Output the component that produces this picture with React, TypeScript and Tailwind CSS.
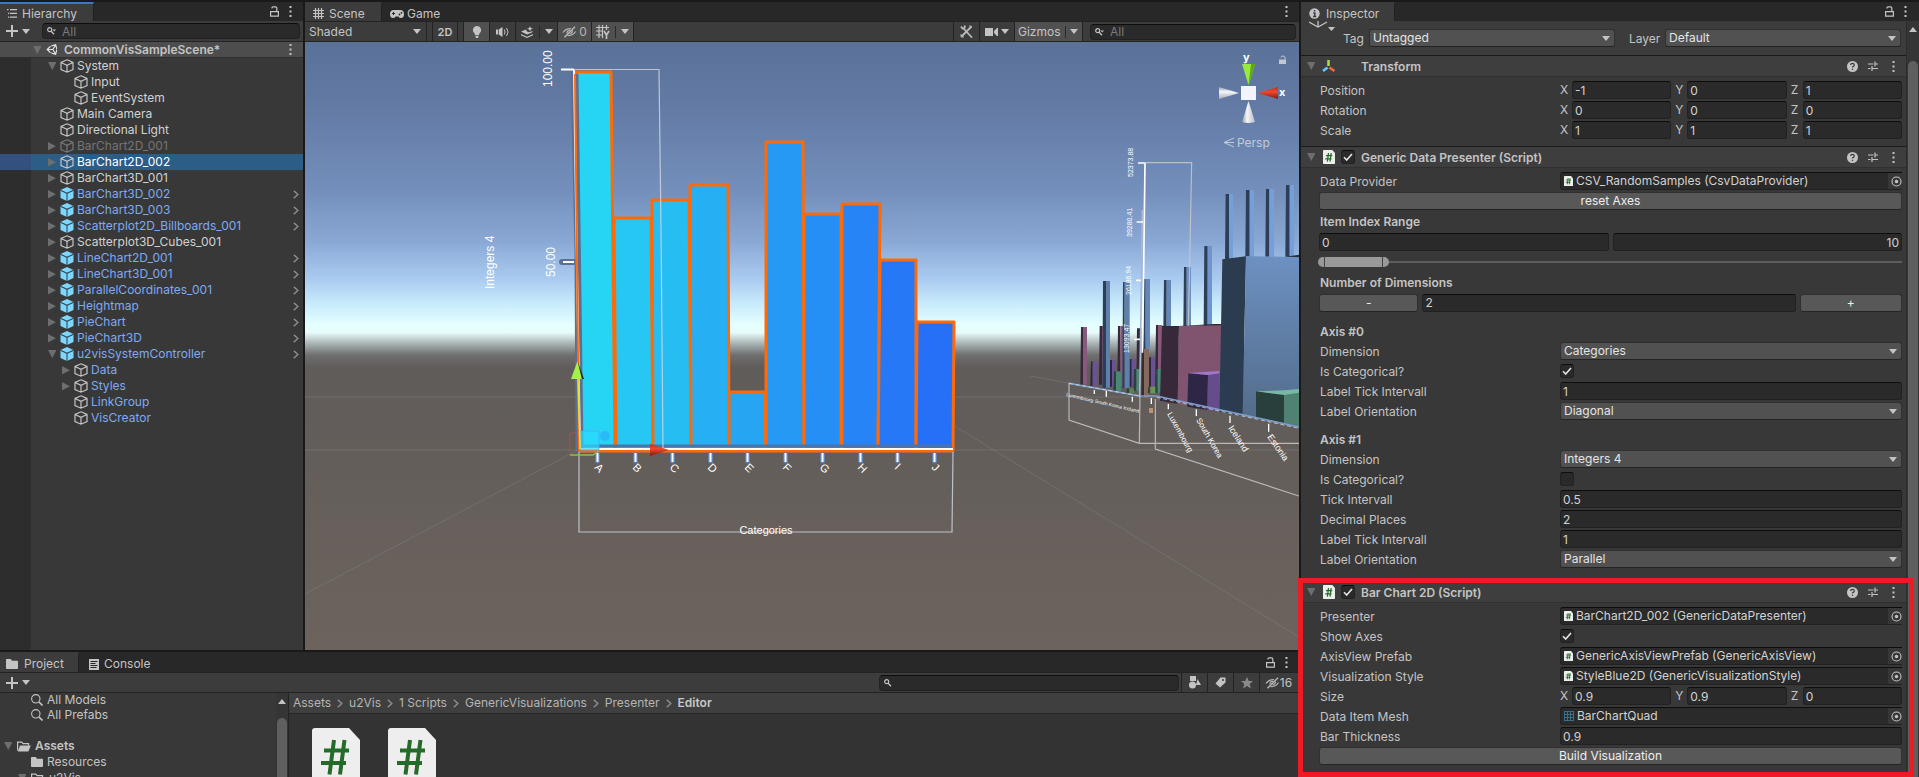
import { useId } from "react";
import type { ReactNode } from "react";
import { FaUnity } from "react-icons/fa";

/* ---------- icons ---------- */

function Caret({ className = "" }: { className?: string }) {
  return (
    <svg width="8" height="5" viewBox="0 0 8 5" className={`shrink-0 fill-[#c4c4c4] ${className}`} aria-hidden="true">
      <path d="M0 0h8L4 5z" />
    </svg>
  );
}

function Foldout({ open, className = "" }: { open: boolean; className?: string }) {
  return (
    <svg width="8" height="8" viewBox="0 0 8 8" className={`shrink-0 fill-[#6e6e6e] ${className}`} aria-hidden="true">
      {open ? <path d="M0 0h8.500L4.250 8z" /> : <path d="M0 0l8 4.250-8 4.250z" />}
    </svg>
  );
}

function Cube({ kind }: { kind: "line" | "dim" | "prefab" }) {
  if (kind === "prefab") {
    return (
      <svg width="14" height="14" viewBox="0 0 14 14" className="shrink-0" aria-hidden="true">
        <path d="M7 0l6.500 3v8L7 14 .5 11V3z" fill="#7fd6fd" />
        <path d="M.5 3.300L7 6.300l6.500-3M7 6.300V14" stroke="#2c4a5c" strokeWidth="1.100" fill="none" />
      </svg>
    );
  }
  return (
    <svg width="14" height="14" viewBox="0 0 14 14" className="shrink-0" fill="none" strokeWidth="1.200" stroke={kind === "dim" ? "#777" : "#c4c4c4"} aria-hidden="true">
      <path d="M7 .8l6 2.700v7L7 13.200l-6-2.700v-7zM1 3.500l6 2.900 6-2.900M7 6.400v6.800" />
    </svg>
  );
}

function Lock() {
  return (
    <svg width="9" height="11" viewBox="0 0 9 11" fill="none" stroke="#c4c4c4" strokeWidth="1.200" aria-hidden="true">
      <path d="M.6 5.600h7.800v4.600H.6zM2 2.600V1.800Q2 .8 3 .8h2.600q1.200 0 1.200 1.200v3.600" />
    </svg>
  );
}

function Kebab() {
  return (
    <svg width="3" height="11" viewBox="0 0 3 11" className="fill-[#c4c4c4]" aria-hidden="true">
      <path d="M.5 0h2v2h-2zM.5 4.500h2v2h-2zM.5 9h2v2h-2z" />
    </svg>
  );
}

function Plus() {
  return (
    <svg width="12" height="12" viewBox="0 0 12 12" className="fill-[#c4c4c4]" aria-hidden="true">
      <path d="M5 0h2v5h5v2H7v5H5V7H0V5h5z" />
    </svg>
  );
}

function SearchSmall({ arrow = false }: { arrow?: boolean }) {
  return (
    <svg width="9" height="8" viewBox="0 0 9 8" className="shrink-0" aria-hidden="true">
      <circle cx="2.700" cy="2.700" r="2" fill="none" stroke="#c4c4c4" strokeWidth="1.200" />
      <path d="M4.200 4.200L7 7.200" stroke="#c4c4c4" strokeWidth="1.300" />
      {arrow && <path d="M5.500 2.500H9L7.250 4.500z" fill="#c4c4c4" />}
    </svg>
  );
}

function SearchLarge() {
  return (
    <svg width="12" height="12" viewBox="0 0 12 12" className="shrink-0" fill="none" stroke="#c4c4c4" aria-hidden="true">
      <circle cx="4.800" cy="4.800" r="4.200" strokeWidth="1.100" />
      <path d="M8 8l3.500 3.500" strokeWidth="1.600" />
    </svg>
  );
}

function EyeOff() {
  return (
    <svg width="15" height="12" viewBox="0 0 15 12" fill="none" stroke="#b4b4b4" strokeWidth="1.200" aria-hidden="true">
      <path d="M1 6.500Q4 2.200 9 2.600M13.500 5.500Q10.500 10.200 5.500 9.500" />
      <path d="M5 7.500Q4.800 4.500 8 4.300M10.500 4.500Q10.500 7.500 7.500 8" />
      <path d="M2.500 11.300L13 .7" strokeWidth="1.500" />
    </svg>
  );
}

function CsIcon({ size }: { size: "sm" | "md" | "lg" }) {
  const box = { sm: "h-[10px] w-[9px]", md: "h-[14px] w-3", lg: "h-14 w-12" }[size];
  return (
    <svg viewBox="0 0 48 56" className={`shrink-0 ${box}`} preserveAspectRatio="none" aria-hidden="true">
      <path d="M3 0h34l11 12v41a3 3 0 0 1-3 3H3a3 3 0 0 1-3-3V3a3 3 0 0 1 3-3z" fill="#eee" />
      <path d="M17.500 46.500L22 12M28 46.500L32.500 12M12 22.500h25M9 35h25" stroke="#246b2a" strokeWidth={size === "lg" ? 4 : 5} fill="none" />
    </svg>
  );
}

function Folder({ open = false }: { open?: boolean }) {
  return open ? (
    <svg width="14" height="11" viewBox="0 0 14 11" className="shrink-0" aria-hidden="true">
      <path d="M.6 9.500V1.100h4.200L6 2.600h5.500v1.800" fill="none" stroke="#c4c4c4" strokeWidth="1.200" />
      <path d="M3 4.600h10.800L11.400 10.500H.8z" fill="#c4c4c4" />
    </svg>
  ) : (
    <svg width="12" height="10" viewBox="0 0 12 10" className="shrink-0 fill-[#c4c4c4]" aria-hidden="true">
      <path d="M.8 0h4L6 1.700h5.200q.8 0 .8.800V9q0 1-.8 1H.8Q0 10 0 9V.8Q0 0 .8 0z" />
    </svg>
  );
}

function Chevron({ className = "" }: { className?: string }) {
  return (
    <svg width="6" height="9" viewBox="0 0 6 9" fill="none" stroke="#8f8f8f" strokeWidth="1.400" className={`shrink-0 ${className}`} aria-hidden="true">
      <path d="M.8.700l4 3.800-4 3.800" />
    </svg>
  );
}

/* ---------- shared controls ---------- */

function IconButton({ label, children, className = "" }: { label: string; children: ReactNode; className?: string }) {
  return (
    <button type="button" aria-label={label} className={`flex h-full shrink-0 items-center justify-center ${className}`}>
      {children}
    </button>
  );
}

function Tab({ active = false, focused = false, icon, label, className = "" }: { active?: boolean; focused?: boolean; icon: ReactNode; label: string; className?: string }) {
  return (
    <button
      type="button"
      className={`flex h-full items-center gap-[6px] border-t-2 pt-[2px] ${focused ? "border-t-[#3a79bb]" : active ? "border-t-[#3c3c3c]" : "border-t-transparent"} ${
        active ? "border-r border-r-[#202020] bg-[#3c3c3c]" : ""
      } ${className}`}
    >
      {icon}
      <span>{label}</span>
    </button>
  );
}

function SearchBox({ label, placeholder, arrow, className }: { label: string; placeholder?: string; arrow?: boolean; className: string }) {
  return (
    <label className={`flex h-4 items-center gap-[6px] rounded border border-[#212121] border-t-[#0d0d0d] bg-[#2a2a2a] px-1 ${className}`}>
      <SearchSmall arrow={arrow} />
      <input type="search" aria-label={label} placeholder={placeholder} className="min-w-0 flex-1 bg-transparent leading-3 outline-none placeholder:text-[#7a7a7a]" />
    </label>
  );
}

function TextBox({ value, label, id, className = "" }: { value: string; label?: string; id?: string; className?: string }) {
  return (
    <input
      id={id}
      aria-label={label}
      defaultValue={value}
      className={`h-[18px] w-full min-w-0 rounded-[3px] border border-[#212121] border-t-[#0d0d0d] bg-[#2a2a2a] px-[2px] text-[#d2d2d2] outline-none ${className}`}
    />
  );
}

function Popup({ value, id, className = "" }: { value: string; id?: string; className?: string }) {
  return (
    <div className={`grid min-w-0 items-center ${className}`}>
      <select id={id} defaultValue={value} className="col-start-1 row-start-1 h-[18px] w-full appearance-none rounded-[3px] border border-[#303030] border-b-[#242424] bg-[#515151] px-[3px] leading-4 text-[#e4e4e4]">
        <option>{value}</option>
      </select>
      <Caret className="pointer-events-none col-start-1 row-start-1 mr-[5px] justify-self-end" />
    </div>
  );
}

function CheckBox({ checked, id, label }: { checked: boolean; id?: string; label?: string }) {
  return (
    <span className="grid size-[14px] shrink-0 place-items-center">
      <input
        id={id}
        aria-label={label}
        type="checkbox"
        defaultChecked={checked}
        className="peer col-start-1 row-start-1 size-[14px] appearance-none rounded-[3px] border border-[#212121] border-t-[#0d0d0d] bg-[#2a2a2a]"
      />
      <svg width="10" height="8" viewBox="0 0 10 8" className="pointer-events-none col-start-1 row-start-1 hidden peer-checked:block" aria-hidden="true">
        <path d="M1 4.300L3.700 7 9 1" fill="none" stroke="#e6e6e6" strokeWidth="1.600" />
      </svg>
    </span>
  );
}

function PushButton({ children, className = "w-full" }: { children: ReactNode; className?: string }) {
  return (
    <button type="button" className={`h-[18px] rounded-[3px] border border-[#303030] border-b-[#242424] bg-[#585858] leading-4 text-[#eee] ${className}`}>
      {children}
    </button>
  );
}

function ObjectRef({ value, id, mesh = false }: { value: string; id?: string; mesh?: boolean }) {
  return (
    <div className="flex h-[18px] w-full items-center rounded-l-[3px] border border-r-0 border-[#212121] border-t-[#0d0d0d] bg-[#2a2a2a] pl-[3px]">
      {mesh ? (
        <svg width="10" height="10" viewBox="0 0 10 10" className="shrink-0" aria-hidden="true">
          <path d="M0 .5h10M0 3.500h10M0 6.500h10M0 9.500h10M.5 0v10M3.500 0v10M6.500 0v10M9.500 0v10" stroke="#3a7f9c" strokeWidth=".8" />
        </svg>
      ) : (
        <CsIcon size="sm" />
      )}
      <input id={id} readOnly defaultValue={value} className="min-w-0 flex-1 bg-transparent pl-[3px] text-[#d2d2d2] outline-none" />
      <button type="button" aria-label={`Select ${value}`} className="flex h-4 w-[14px] items-center justify-end bg-[#373737]">
        <svg width="11" height="11" viewBox="0 0 11 11" className="shrink-0" aria-hidden="true">
          <circle cx="5.500" cy="5.500" r="4.500" fill="none" stroke="#c4c4c4" strokeWidth="1.100" />
          <circle cx="5.500" cy="5.500" r="1.700" fill="#c4c4c4" />
        </svg>
      </button>
    </div>
  );
}

/* ---------- hierarchy ---------- */

type Node = { name: string; depth: number; fold?: "open" | "closed"; kind?: "prefab" | "dim" | "child"; selected?: boolean };

const nodes: Node[] = [
  { name: "System", depth: 1, fold: "open" },
  { name: "Input", depth: 2 },
  { name: "EventSystem", depth: 2 },
  { name: "Main Camera", depth: 1 },
  { name: "Directional Light", depth: 1 },
  { name: "BarChart2D_001", depth: 1, fold: "closed", kind: "dim" },
  { name: "BarChart2D_002", depth: 1, fold: "closed", selected: true },
  { name: "BarChart3D_001", depth: 1, fold: "closed" },
  { name: "BarChart3D_002", depth: 1, fold: "closed", kind: "prefab" },
  { name: "BarChart3D_003", depth: 1, fold: "closed", kind: "prefab" },
  { name: "Scatterplot2D_Billboards_001", depth: 1, fold: "closed", kind: "prefab" },
  { name: "Scatterplot3D_Cubes_001", depth: 1, fold: "closed" },
  { name: "LineChart2D_001", depth: 1, fold: "closed", kind: "prefab" },
  { name: "LineChart3D_001", depth: 1, fold: "closed", kind: "prefab" },
  { name: "ParallelCoordinates_001", depth: 1, fold: "closed", kind: "prefab" },
  { name: "Heightmap", depth: 1, fold: "closed", kind: "prefab" },
  { name: "PieChart", depth: 1, fold: "closed", kind: "prefab" },
  { name: "PieChart3D", depth: 1, fold: "closed", kind: "prefab" },
  { name: "u2visSystemController", depth: 1, fold: "open", kind: "prefab" },
  { name: "Data", depth: 2, fold: "closed", kind: "child" },
  { name: "Styles", depth: 2, fold: "closed", kind: "child" },
  { name: "LinkGroup", depth: 2, kind: "child" },
  { name: "VisCreator", depth: 2, kind: "child" },
];

function HierarchyRow({ node }: { node: Node }) {
  const color = node.selected ? "text-white" : node.kind === "dim" ? "text-[#747474]" : node.kind ? "text-[#7faaf0]" : "text-[#d2d2d2]";
  return (
    <li className={`flex h-4 ${node.selected ? "bg-[#2c5d87]" : ""}`}>
      <span className={`w-[31px] shrink-0 ${node.selected ? "bg-[#33507f]" : ""}`} />
      <div className={`flex flex-1 items-center ${node.depth === 2 ? "pl-[31px]" : "pl-[17px]"} ${color}`}>
        <span className="w-3">{node.fold && <Foldout open={node.fold === "open"} />}</span>
        <Cube kind={node.kind === "prefab" ? "prefab" : node.kind === "dim" ? "dim" : "line"} />
        <span className="ml-[3px] flex-1 whitespace-nowrap">{node.name}</span>
        {node.kind === "prefab" && <Chevron className="mr-1" />}
      </div>
    </li>
  );
}

function Hierarchy() {
  return (
    <section aria-label="Hierarchy" className="flex min-w-0 flex-col overflow-hidden bg-[#383838]">
      <header className="flex h-[19px] shrink-0 items-center justify-between bg-[#282828]">
        <Tab
          active
          focused
          className="w-[94px] pl-[7px]"
          label="Hierarchy"
          icon={
            <svg width="10" height="9" viewBox="0 0 10 9" className="-mr-px fill-[#c4c4c4]" aria-hidden="true">
              <path d="M3 0h7v1.300H3zM3 3.800h7v1.300H3zM3 7.500h7v1.300H3zM0 0h1.500v1.300H0zM1 3.800h1.300v1.300H1zM1 7.500h1.300v1.300H1z" />
            </svg>
          }
        />
        <div className="flex items-center gap-[10px] pr-[11px]">
          <IconButton label="Lock hierarchy"><Lock /></IconButton>
          <IconButton label="Hierarchy menu"><Kebab /></IconButton>
        </div>
      </header>
      <div className="flex h-[21px] shrink-0 items-center border-b border-[#232323] bg-[#3c3c3c] pr-[3px] pl-[6px]">
        <IconButton label="Create" className="gap-1"><Plus /><Caret /></IconButton>
        <SearchBox label="Search hierarchy" placeholder="All" arrow className="ml-3 flex-1" />
      </div>
      <div className="flex h-4 shrink-0 items-center border-b border-[#303030] bg-[#4d4d4d] pr-[11px] pl-[33px] font-semibold">
        <Foldout open className="mr-[5px]" />
        <FaUnity className="size-[13px] text-[#e4e4e4]" />
        <span className="ml-[5px] flex-1">CommonVisSampleScene*</span>
        <IconButton label="Scene menu"><Kebab /></IconButton>
      </div>
      <ul className="flex-1 bg-linear-to-r from-[#2d2d2d] from-[31px] to-[#383838] to-[31px]">
        {nodes.map((n) => <HierarchyRow key={n.name} node={n} />)}
      </ul>
    </section>
  );
}

/* ---------- scene view ---------- */

const bars = [
  { l: "A", c: "#26d4f3", p: "576,72 611,72 615,451 580,451", x: 597 },
  { l: "B", c: "#26c8f3", p: "614,218 651,218 653,451 616,451", x: 635 },
  { l: "C", c: "#26bdf3", p: "652,200 689,200 691,451 653,451", x: 672 },
  { l: "D", c: "#26b0f3", p: "690,185 728,185 729,451 691,451", x: 710 },
  { l: "E", c: "#26a5f3", p: "729,392 765,392 766,451 729,451", x: 747 },
  { l: "F", c: "#2699f5", p: "766,142 803,142 804,451 766,451", x: 785 },
  { l: "G", c: "#268ff5", p: "804,214 841,214 841,451 804,451", x: 822 },
  { l: "H", c: "#2684f6", p: "842,204 880,204 878,451 842,451", x: 860 },
  { l: "I", c: "#2678f6", p: "880,260 916,260 916,451 878,451", x: 897 },
  { l: "J", c: "#2670f8", p: "917,322 954,322 953,451 916,451", x: 934 },
];

/* left edge, shade edge, right edge, top, bottom, shade, face */
const columns: [number, number, number, number, number, string, string][] = [
  [153, 159, 171, 591, 764, "#35293a", "#87597a"],
  [209, 216, 220, 588, 764, "#35293a", "#87597a"],
  [264, 271, 281, 588, 770, "#35293a", "#87597a"],
  [321, 330, 334, 595, 770, "#35293a", "#87597a"],
  [183, 188, 201, 694, 768, "#2d2640", "#6a5390"],
  [240, 246, 258, 690, 770, "#2d2640", "#6a5390"],
  [299, 305, 318, 687, 770, "#2d2640", "#6a5390"],
  [357, 363, 376, 682, 770, "#2d2640", "#6a5390"],
  [378, 384, 397, 585, 718, "#35293a", "#87597a"],
  [219, 228, 240, 453, 773, "#2d3f58", "#5f80ab"],
  [279, 284, 299, 456, 774, "#2d3f58", "#5f80ab"],
  [342, 347, 360, 447, 657, "#2d3f58", "#6587b6"],
  [402, 410, 423, 450, 588, "#2d3f58", "#6587b6"],
  [462, 470, 483, 411, 588, "#2d3f58", "#6b90c2"],
  [523, 533, 546, 348, 588, "#2d3f58", "#6f96cc"],
  [587, 597, 609, 192, 387, "#2d3f58", "#759fd6"],
  [648, 659, 672, 180, 380, "#2d3f58", "#759fd6"],
  [708, 718, 732, 177, 380, "#2d3f58", "#759fd6"],
  [768, 779, 792, 165, 380, "#2d3f58", "#759fd6"],
  [336, 342, 357, 657, 800, "#3a2c28", "#85695c"],
  [252, 258, 273, 724, 785, "#28443f", "#4e8676"],
  [312, 319, 329, 717, 782, "#28443f", "#4e8676"],
  [376, 383, 394, 717, 788, "#28443f", "#4e8676"],
  [291, 298, 312, 775, 790, "#34442c", "#5f8050"],
  [355, 361, 376, 770, 790, "#34442c", "#6d9459"],
];

function Viewport() {
  return (
    <svg viewBox="305 42 994 608" preserveAspectRatio="xMidYMid slice" className="block h-full w-full" role="img" aria-label="Scene with a two-dimensional bar chart selected">
      <defs>
        <linearGradient id="sky" gradientUnits="userSpaceOnUse" x1="0" y1="42" x2="0" y2="650">
          <stop offset="0" stopColor="#5a7198" />
          <stop offset=".12" stopColor="#647ca6" />
          <stop offset=".25" stopColor="#7590bd" />
          <stop offset=".33" stopColor="#8ba9d6" />
          <stop offset=".39" stopColor="#aacbf0" />
          <stop offset=".43" stopColor="#c8eafc" />
          <stop offset=".465" stopColor="#e4ffff" />
          <stop offset=".478" stopColor="#e8fbfb" />
          <stop offset=".496" stopColor="#a9b3b4" />
          <stop offset=".515" stopColor="#6f6f6f" />
          <stop offset=".535" stopColor="#605c5a" />
          <stop offset=".7" stopColor="#645e5a" />
          <stop offset="1" stopColor="#6c635d" />
        </linearGradient>
        <linearGradient id="cone" x1="0" x2="1">
          <stop offset="0" stopColor="#9aa0a8" />
          <stop offset=".4" stopColor="#f4f6fa" />
          <stop offset="1" stopColor="#b8bcc4" />
        </linearGradient>
        <linearGradient id="coneV" x1="0" x2="0" y1="0" y2="1">
          <stop offset="0" stopColor="#9aa0a8" />
          <stop offset=".4" stopColor="#f4f6fa" />
          <stop offset="1" stopColor="#a8acb4" />
        </linearGradient>
        <linearGradient id="coneRed" x1="0" x2="0" y1="0" y2="1">
          <stop offset="0" stopColor="#c02a12" />
          <stop offset=".4" stopColor="#f5482c" />
          <stop offset="1" stopColor="#7c1c0c" />
        </linearGradient>
        <linearGradient id="bigBlue" x1="0" x2="0" y1="0" y2="1">
          <stop offset="0" stopColor="#6c91c2" />
          <stop offset="1" stopColor="#526a87" />
        </linearGradient>
      </defs>
      <rect x="305" y="42" width="994" height="608" fill="url(#sky)" />

      <g stroke="#8a8682" strokeWidth="1" opacity=".4" fill="none">
        <path d="M305 450h994M305 397h994M578 450L305 594M953 425l346 212M1030 376l269 50" />
      </g>

      <svg x="1030" y="130" width="269" height="380" viewBox="0 0 807 1140" aria-hidden="true">
        {columns.map(([a, b, c, t, bot, shade, face]) => (
          <g key={`${a}-${t}`}>
            <path d={`M${a} ${t}H${b}V${bot}H${a - 2}z`} fill={shade} />
            <path d={`M${b} ${t}H${c}V${bot}H${b}z`} fill={face} />
          </g>
        ))}
        <path d="M396 588h51l-4 234-53-10z" fill="#37293a" />
        <path d="M447 588l127-4v252l-131-14z" fill="#80546f" />
        <path d="M447 588l107-6h20v4z" fill="#2f2530" />
        <path d="M475 730l59 5-2 105-60-10z" fill="#2d2644" />
        <path d="M534 735l34-5v113l-36-3z" fill="#654d8c" />
        <path d="M475 729l93-6v7l-34 5z" fill="#a078d0" />
        <path d="M577 388l71-9-10 479-70-13z" fill="#2c3c50" />
        <path d="M648 378l159 4v506l-169-30z" fill="url(#bigBlue)" />
        <path d="M766 380l41-6v8z" fill="#26323f" />
        <path d="M678 784l84 9v85l-84-10z" fill="#283f3c" />
        <path d="M762 793l45-5v100l-45-10z" fill="#508273" />
        <path d="M678 784l84-3 45-4v11l-45 7z" fill="#78b8a6" />
        <path d="M117 760l213 38h50l427 93" stroke="#7f9cc8" strokeWidth="5" fill="none" />
        <path d="M117 760l213 38M380 802l427 93" stroke="#e4ecf6" strokeWidth="2" strokeDasharray="12 8" fill="none" />
        <g fill="none" stroke="#c9c9c9" strokeWidth="3.500" opacity=".85">
          <path d="M117 758v112l211 70h479M330 800l-2 140M376 808v149l431 141M345 98h140l-6 300-4 190" />
        </g>
        <path d="M345 98l-5 400-3 170" stroke="#fff" strokeWidth="5" fill="none" />
        <path d="M337 240l-4 300-4 262" stroke="#a9b8d2" strokeWidth="5" fill="none" />
        <path d="M324 99h20M320 276h19M318 451h15M313 628h17" stroke="#fff" strokeWidth="5" />
        <path d="M193 780v12M229 782v18M307 800v15M364 804v18M415 822v16M499 838v20M600 857v22M716 881v24" stroke="#fff" strokeWidth="4" />
      </svg>

      <g fill="#fff" fontFamily="'Liberation Sans', Arial, sans-serif" fontSize="7">
        <text transform="translate(1133 177) rotate(-90)">52373.88</text>
        <text transform="translate(1132 237) rotate(-90)">39280.41</text>
        <text transform="translate(1131 295) rotate(-90)">26186.94</text>
        <text transform="translate(1129 353) rotate(-90)">13093.47</text>
        <text transform="translate(1066 396) rotate(13)" fontSize="5">Luxembourg South Korea Iceland</text>
        <text transform="translate(1149 413)">II</text>
        <text transform="translate(1167 414) rotate(61)" fontSize="8">Luxembourg</text>
        <text transform="translate(1196 420) rotate(60)" fontSize="8">South Korea</text>
        <text transform="translate(1228 428) rotate(57)" fontSize="9">Iceland</text>
        <text transform="translate(1267 437) rotate(55)" fontSize="9">Estonia</text>
      </g>

      <path d="M574 71l4 180 1 198h374" fill="none" stroke="#5a7096" strokeWidth="7" strokeLinejoin="round" />
      <path d="M562 262h12" stroke="#5a7096" strokeWidth="6" strokeLinecap="round" />
      <g stroke="#ff6a08" strokeWidth="3" strokeLinejoin="round">
        {bars.map((b) => <polygon key={b.l} points={b.p} fill={b.c} />)}
      </g>
      <path d="M577 74l5 375" stroke="#5a7096" strokeWidth="3" />
      <path d="M582 446h370" stroke="#4c74a8" strokeWidth="3" />
      <path d="M580 449h373" stroke="#fff" strokeWidth="2" />
      <path d="M574 70l2 140 4 240" stroke="#f4f4f4" strokeWidth="2" fill="none" />
      <path d="M575 74l4 377" stroke="#ff6a08" strokeWidth="2" />
      <path d="M561 69.500h13M563 262h11" stroke="#fff" strokeWidth="2" />
      {bars.map((b) => (
        <g key={b.l}>
          <path d={`M${b.x + 0.5} 455v6`} stroke="#5b82b8" strokeWidth="5" strokeLinecap="round" />
          <path d={`M${b.x + 0.5} 453v9`} stroke="#fff" strokeWidth="2" />
          <text transform={`translate(${b.x - 3} 468) rotate(45)`} fill="#fff" fontFamily="'Liberation Sans', Arial, sans-serif" fontSize="11">{b.l}</text>
        </g>
      ))}
      <g fill="none" stroke="#d4dae4" strokeWidth="1.200" opacity=".8">
        <path d="M574 69.500h85l2 160 2 220M579 452v80h373l1-80" />
      </g>
      <g fill="#fff" fontFamily="'Liberation Sans', Arial, sans-serif" fontSize="12">
        <text transform="translate(552 87) rotate(-90)">100.00</text>
        <text transform="translate(555 277) rotate(-90)">50.00</text>
        <text transform="translate(494 289) rotate(-90)">Integers 4</text>
        <text x="766" y="534" textAnchor="middle" fontSize="11">Categories</text>
      </g>

      <path d="M580 431h19v19h-19z" fill="#2bdcff" fillOpacity=".7" stroke="#4aa8ff" strokeWidth=".8" />
      <circle cx="605" cy="436" r="5" fill="#2ab4f8" fillOpacity=".8" />
      <path d="M570 454v-20l10-4" fill="none" stroke="#a0584c" strokeWidth="1" />
      <path d="M570 455h23l6-4" fill="none" stroke="#9ab850" strokeWidth="1.500" />
      <path d="M578 379l2 70" stroke="#f0e030" strokeWidth="1.500" />
      <path d="M577.500 361l-6.500 18h11z" fill="#a5f048" />
      <path d="M577.500 361l4.500 18h2z" fill="#1c2c08" />
      <path d="M669 450l-19-6v12z" fill="url(#coneRed)" />

      <path d="M1242 64h13l-6.500 21z" fill="#98ea3c" />
      <path d="M1251 64h4l-6.500 21z" fill="#5fa818" />
      <path d="M1258 93l20-6v12z" fill="url(#coneRed)" />
      <path d="M1239 93l-20-6v12z" fill="url(#coneV)" />
      <path d="M1248.500 101l6.500 21q-6.500 2-13 0z" fill="url(#cone)" />
      <rect x="1241" y="86" width="15" height="14" fill="#f1f4fa" />
      <g fill="#fff" fontFamily="Inter, sans-serif" fontSize="11" fontWeight="700">
        <text x="1243" y="61">y</text>
        <text x="1279" y="96">x</text>
      </g>
      <text x="1237" y="147" fill="#c3cad4" fontFamily="Inter, sans-serif" fontSize="12">Persp</text>
      <path d="M1234 138l-10 4.500 10 4.500M1224 142.500h10" fill="none" stroke="#c3cad4" strokeWidth="1" />
      <path d="M1279 59.500h7v4.500h-7z" fill="#c3c8d0" />
      <path d="M1281 57.500q0-1.500 2-1.500t2 1.500v2" fill="none" stroke="#c3c8d0" strokeWidth="1" />
    </svg>
  );
}

function SceneView() {
  const btn = "flex h-full shrink-0 items-center border-r border-[#232323]";
  return (
    <section aria-label="Scene" className="flex min-w-0 flex-col overflow-hidden bg-[#3c3c3c]">
      <header className="flex h-[19px] shrink-0 items-center bg-[#282828]">
        <Tab
          active
          className="w-[77px] pl-2"
          label="Scene"
          icon={
            <svg width="11" height="11" viewBox="0 0 11 11" className="-mr-px" stroke="#c4c4c4" strokeWidth="1.200" aria-hidden="true">
              <path d="M2.500 0v11M5.500 0v11M8.500 0v11M0 2.500h11M0 5.500h11M0 8.500h11" />
            </svg>
          }
        />
        <Tab
          className="pl-2"
          label="Game"
          icon={
            <svg width="14" height="8" viewBox="0 0 14 8" className="-mr-[3px]" aria-hidden="true">
              <path d="M4 0h6q4 0 4 4t-3 4q-2 0-2.500-1.500h-3Q5 8 3 8 0 8 0 4t4-4z" fill="#c4c4c4" />
              <path d="M2 3.500h3M3.500 2v3" stroke="#282828" />
              <circle cx="9.500" cy="4.500" r=".9" fill="#282828" />
              <circle cx="11.500" cy="2.800" r=".9" fill="#282828" />
            </svg>
          }
        />
        <div className="ml-auto pr-[11px]"><IconButton label="Scene menu"><Kebab /></IconButton></div>
      </header>
      <div className="flex h-[21px] shrink-0 items-center border-y border-[#232323]">
        <div className="mr-[5px] grid h-full w-[122px] shrink-0 items-center border-r border-[#232323]">
          <select aria-label="Draw mode" defaultValue="Shaded" className="col-start-1 row-start-1 h-full w-full appearance-none bg-transparent pl-1">
            <option>Shaded</option>
          </select>
          <Caret className="pointer-events-none col-start-1 row-start-1 mr-[5px] justify-self-end" />
        </div>
        <button type="button" className={`${btn} mr-[5px] w-[26px] justify-center border-l text-[11px] font-semibold`}>2D</button>
        <button type="button" aria-label="Lighting" className={`${btn} w-[27px] justify-center border-l bg-[#505050]`}>
          <svg width="8" height="12" viewBox="0 0 8 12" className="fill-[#c4c4c4]" aria-hidden="true">
            <path d="M4 0a4 4 0 0 1 2.500 7.200L6 9H2l-.5-1.800A4 4 0 0 1 4 0zM2.200 9.700h3.600L5 12H3z" />
          </svg>
        </button>
        <button type="button" aria-label="Audio" className={`${btn} w-[26px] justify-center`}>
          <svg width="13" height="10" viewBox="0 0 13 10" aria-hidden="true">
            <path d="M0 2.500h2v5H0zM2.700 2.500L6.500 0v10L2.700 7.500z" fill="#c4c4c4" />
            <path d="M8.300 2.500q1.500 2.500 0 5M10.500 1q3 4 0 8" fill="none" stroke="#c4c4c4" />
          </svg>
        </button>
        <button type="button" aria-label="Effects" className={`${btn} w-[42px] justify-between pr-1 pl-[5px]`}>
          <svg width="13" height="12" viewBox="0 0 13 12" className="fill-[#c4c4c4]" aria-hidden="true">
            <path d="M0 5.500l5-2 1 2 2 .700L12 5 11 6.500 6 8.500zM0 8l6 2.800L12 8v1.300L6 12 0 9.300z" />
            <path d="M9 0l.8 2L12 2.800 9.800 3.600 9 5.800l-.8-2.200L6 2.800 8.200 2z" />
          </svg>
          <span className="h-3 w-px bg-[#2a2a2a]" />
          <Caret />
        </button>
        <button type="button" aria-label="Hidden objects" className={`${btn} w-[34px] justify-center gap-[2px] bg-[#505050]`}>
          <EyeOff /><span className="text-[#b4b4b4]">0</span>
        </button>
        <button type="button" aria-label="Grid" className={`${btn} w-[42px] justify-between bg-[#505050] pr-1 pl-1`}>
          <svg width="14" height="14" viewBox="0 0 14 14" fill="none" stroke="#c4c4c4" strokeWidth="1.200" aria-hidden="true">
            <path d="M3 0v13M6.500 0v13M10.500 0v5M0 2.500h13M0 6h7M0 10h7" />
            <path d="M8 6l2.500 4L13 6M10.500 10v4" strokeWidth="1.600" />
          </svg>
          <span className="h-3 w-px bg-[#2a2a2a]" />
          <Caret />
        </button>
        <div className="flex-1" />
        <button type="button" aria-label="Component tools" className={`${btn} w-[27px] justify-center border-l`}>
          <svg width="13" height="13" viewBox="0 0 13 13" fill="none" stroke="#b8b8b8" strokeWidth="1.800" aria-hidden="true">
            <path d="M1 12L11.500 1.500M3.500 3.500l8.500 9M1 1.500l1.500 2 2-.5.500-2.500" />
            <path d="M9 1l3 .500M.5 9.500l3 3" strokeWidth="1.200" />
          </svg>
        </button>
        <button type="button" aria-label="Camera" className={`${btn} w-[35px] justify-between pr-[5px] pl-[5px]`}>
          <svg width="13" height="8" viewBox="0 0 13 8" className="fill-[#c4c4c4]" aria-hidden="true">
            <path d="M0 0h8v8H0zM9 3l3-3h1v8h-1L9 5z" />
          </svg>
          <Caret />
        </button>
        <button type="button" className={`${btn} w-[68px] justify-between bg-[#505050] pr-1 pl-[3px]`}>
          <span>Gizmos</span>
          <span className="h-3 w-px bg-[#2a2a2a]" />
          <Caret />
        </button>
        <SearchBox label="Search scene" placeholder="All" arrow className="mr-[3px] ml-[7px] w-[206px]" />
      </div>
      <div className="min-h-0 flex-1"><Viewport /></div>
    </section>
  );
}

/* ---------- inspector ---------- */

function Row({ label, children }: { label: string; children: (id: string) => ReactNode }) {
  const id = useId();
  return (
    <div className="flex h-5 items-center">
      <label htmlFor={id} className="w-[241px] shrink-0 pt-px pl-px">{label}</label>
      <div className="flex min-w-0 flex-1 items-center">{children(id)}</div>
    </div>
  );
}

function Vector({ label, value }: { label: string; value: [string, string, string] }) {
  return (
    <fieldset className="flex h-5 items-center" aria-label={label}>
      <span className="w-[241px] shrink-0 pt-px pl-px">{label}</span>
      <div className="grid min-w-0 flex-1 grid-cols-3 gap-1">
        {(["X", "Y", "Z"] as const).map((axis, i) => (
          <label key={axis} className="flex items-center">
            <span className="w-3 shrink-0">{axis}</span>
            <TextBox value={value[i]} />
          </label>
        ))}
      </div>
    </fieldset>
  );
}

function Component({ title, icon, toggle = false, children, className = "" }: { title: string; icon: ReactNode; toggle?: boolean; children: ReactNode; className?: string }) {
  return (
    <section className={`relative ${className}`}>
      <header className="flex h-[22px] items-center border-y border-t-[#1a1a1a] border-b-[#303030] bg-[#3e3e3e] pr-[11px] pl-[6px]">
        <Foldout open />
        <span className="ml-[7px] flex w-[14px] justify-center">{icon}</span>
        <span className="ml-[5px] flex w-5">{toggle && <CheckBox checked label={`Enable ${title}`} />}</span>
        <h2 className="flex-1 pt-px font-semibold">{title}</h2>
        <div className="flex items-center gap-[10px]">
          <IconButton label="Help">
            <svg width="11" height="11" viewBox="0 0 11 11" aria-hidden="true">
              <circle cx="5.500" cy="5.500" r="5.500" fill="#c4c4c4" />
              <path d="M3.700 4q0-1.700 1.800-1.700T7.300 4q0 .8-1 1.300t-.8 1.200M5.500 7.800v1.300" fill="none" stroke="#3e3e3e" strokeWidth="1.300" />
            </svg>
          </IconButton>
          <IconButton label="Presets">
            <svg width="10" height="10" viewBox="0 0 10 10" stroke="#c4c4c4" strokeWidth="1.200" aria-hidden="true">
              <path d="M0 3h5.500M7 3h3M7 .5v5M0 7.500h2.500M4 7.500h6M4 5v5" />
            </svg>
          </IconButton>
          <IconButton label="Component menu" className="ml-1"><Kebab /></IconButton>
        </div>
      </header>
      <div className="pt-[3px] pr-1 pl-[18px]">{children}</div>
    </section>
  );
}

function Inspector() {
  return (
    <aside aria-label="Inspector" className="flex min-w-0 flex-col bg-[#383838]">
      <header className="flex h-[19px] shrink-0 items-center justify-between bg-[#282828]">
        <Tab
          active
          className="w-[94px] gap-[5px] pl-2"
          label="Inspector"
          icon={
            <svg width="11" height="11" viewBox="0 0 11 11" aria-hidden="true">
              <circle cx="5.500" cy="5.500" r="5.200" fill="#c4c4c4" />
              <path d="M5.500 2v1.600M4.300 5h1.500v3.300M4 8.500h3.200" fill="none" stroke="#3c3c3c" strokeWidth="1.500" />
            </svg>
          }
        />
        <div className="flex items-center gap-[10px] pr-3">
          <IconButton label="Lock inspector"><Lock /></IconButton>
          <IconButton label="Inspector menu"><Kebab /></IconButton>
        </div>
      </header>
      <div className="flex flex-1">
        <div className="min-w-0 flex-1">
          <div className="flex h-[34px] items-start bg-[#3c3c3c] pr-[5px] pl-2">
            <svg width="27" height="12" viewBox="0 0 27 12" className="shrink-0" aria-hidden="true">
              <path d="M0 1l9 5 9-5M9 0v6" fill="none" stroke="#c4c4c4" strokeWidth="1.300" />
              <path d="M19 6h7l-3.500 4z" fill="#c4c4c4" />
            </svg>
            <div className="flex flex-1 items-center pt-2">
              <label htmlFor="tag" className="ml-[7px] w-[26px] pt-px">Tag</label>
              <Popup id="tag" value="Untagged" className="flex-[246]" />
              <label htmlFor="layer" className="ml-[14px] w-9 pt-px">Layer</label>
              <Popup id="layer" value="Default" className="flex-[236]" />
            </div>
          </div>
          <Component
            title="Transform"
            className="pb-[6px]"
            icon={
              <svg width="14" height="13" viewBox="0 0 14 13" fill="none" strokeWidth="2.600" aria-hidden="true">
                <path d="M6.500 0v6" stroke="#a4e04a" />
                <path d="M5.500 7.500L1 11" stroke="#6cc4f4" />
                <path d="M7.500 7.500L12.500 11" stroke="#f4683c" />
              </svg>
            }
          >
            <Vector label="Position" value={["-1", "0", "1"]} />
            <Vector label="Rotation" value={["0", "0", "0"]} />
            <Vector label="Scale" value={["1", "1", "1"]} />
          </Component>
          <Component title="Generic Data Presenter (Script)" toggle icon={<CsIcon size="md" />} className="pb-3">
            <Row label="Data Provider">{(id) => <ObjectRef id={id} value="CSV_RandomSamples (CsvDataProvider)" />}</Row>
            <div className="flex h-5 items-center"><PushButton>reset Axes</PushButton></div>
            <h3 className="flex h-[21px] items-center pt-px pl-px font-semibold">Item Index Range</h3>
            <div className="flex h-5 items-center gap-1">
              <TextBox label="Range start" value="0" />
              <TextBox label="Range end" value="10" className="text-right" />
            </div>
            <div className="relative -ml-px flex h-5 items-center">
              <span className="flex h-[10px] w-[71px] rounded-full bg-[#999] px-[6px]">
                <span className="flex-1 border-x border-[#444]" />
              </span>
              <span className="h-[2px] flex-1 bg-[#5e5e5e]" />
              <input type="range" aria-label="Item index range" min="0" max="70" defaultValue="10" className="absolute inset-0 opacity-0" />
            </div>
            <h3 className="flex h-5 items-center pt-px pl-px font-semibold">Number of Dimensions</h3>
            <div className="mb-2 flex h-[21px] items-center gap-1">
              <PushButton className="min-w-0 flex-[98]">-</PushButton>
              <div className="flex min-w-0 flex-[375]"><TextBox label="Number of Dimensions" value="2" /></div>
              <PushButton className="min-w-0 flex-[101]">+</PushButton>
            </div>
            <h3 className="flex h-5 items-center pt-px pl-px font-semibold">Axis #0</h3>
            <Row label="Dimension">{(id) => <Popup id={id} value="Categories" className="flex-1" />}</Row>
            <Row label="Is Categorical?">{(id) => <CheckBox id={id} checked />}</Row>
            <Row label="Label Tick Intervall">{(id) => <TextBox id={id} value="1" />}</Row>
            <Row label="Label Orientation">{(id) => <Popup id={id} value="Diagonal" className="flex-1" />}</Row>
            <h3 className="mt-2 flex h-5 items-center pt-px pl-px font-semibold">Axis #1</h3>
            <Row label="Dimension">{(id) => <Popup id={id} value="Integers 4" className="flex-1" />}</Row>
            <Row label="Is Categorical?">{(id) => <CheckBox id={id} checked={false} />}</Row>
            <Row label="Tick Intervall">{(id) => <TextBox id={id} value="0.5" />}</Row>
            <Row label="Decimal Places">{(id) => <TextBox id={id} value="2" />}</Row>
            <Row label="Label Tick Intervall">{(id) => <TextBox id={id} value="1" />}</Row>
            <Row label="Label Orientation">{(id) => <Popup id={id} value="Parallel" className="flex-1" />}</Row>
          </Component>
          <Component title="Bar Chart 2D (Script)" toggle icon={<CsIcon size="md" />}>
            <Row label="Presenter">{(id) => <ObjectRef id={id} value="BarChart2D_002 (GenericDataPresenter)" />}</Row>
            <Row label="Show Axes">{(id) => <CheckBox id={id} checked />}</Row>
            <Row label="AxisView Prefab">{(id) => <ObjectRef id={id} value="GenericAxisViewPrefab (GenericAxisView)" />}</Row>
            <Row label="Visualization Style">{(id) => <ObjectRef id={id} value="StyleBlue2D (GenericVisualizationStyle)" />}</Row>
            <Vector label="Size" value={["0.9", "0.9", "0"]} />
            <Row label="Data Item Mesh">{(id) => <ObjectRef id={id} mesh value="BarChartQuad" />}</Row>
            <Row label="Bar Thickness">{(id) => <TextBox id={id} value="0.9" />}</Row>
            <div className="flex h-5 items-center"><PushButton>Build Visualization</PushButton></div>
            <span className="pointer-events-none absolute -top-[3px] -right-2 -bottom-[11px] -left-[3px] z-10 border-[5px] border-[#ed1c24]" />
          </Component>
        </div>
        <div className="flex w-[13px] shrink-0 flex-col items-center border-l border-[#2c2c2c] bg-[#353535] pt-[6px]">
          <Caret className="rotate-180" />
          <span className="mt-[29px] w-[10px] flex-1 rounded-t-full bg-[#5f5f5f]" />
        </div>
      </div>
    </aside>
  );
}

/* ---------- project ---------- */

const crumbs = ["Assets", "u2Vis", "1 Scripts", "GenericVisualizations", "Presenter"];

function Project() {
  const btn = "flex h-full w-[26px] items-center justify-center border-l border-[#232323]";
  return (
    <section aria-label="Project" className="flex min-h-0 flex-col overflow-hidden bg-[#383838]">
      <header className="flex h-5 shrink-0 items-center bg-[#282828]">
        <Tab active className="w-[79px] gap-1 pl-[6px]" label="Project" icon={<Folder />} />
        <Tab
          className="pl-[10px]"
          label="Console"
          icon={
            <svg width="10" height="11" viewBox="0 0 10 11" className="-mr-px" aria-hidden="true">
              <rect width="10" height="11" fill="#c4c4c4" />
              <path d="M1.500 2.500h7M1.500 4.500h5M1.500 6.500h7M1.500 8.500h6" stroke="#282828" />
            </svg>
          }
        />
        <div className="ml-auto flex items-center gap-[10px] pr-[11px]">
          <IconButton label="Lock project"><Lock /></IconButton>
          <IconButton label="Project menu"><Kebab /></IconButton>
        </div>
      </header>
      <div className="flex h-[21px] shrink-0 items-center border-y border-[#232323] bg-[#3c3c3c] pl-[6px]">
        <IconButton label="Create asset" className="gap-1"><Plus /><Caret /></IconButton>
        <SearchBox label="Search project" className="mr-[2px] ml-auto w-[300px]" />
        <button type="button" aria-label="Search by type" className={btn}>
          <svg width="12" height="13" viewBox="0 0 12 13" className="fill-[#c4c4c4]" aria-hidden="true">
            <path d="M1 0h6v5H1zM8.500 3l3.500 6H7z" /><circle cx="3.500" cy="9" r="3.500" />
          </svg>
        </button>
        <button type="button" aria-label="Search by label" className={btn}>
          <svg width="11" height="11" viewBox="0 0 11 11" aria-hidden="true">
            <path d="M5.500.500h5v5L5 10.500.500 6.500z" fill="#c4c4c4" /><circle cx="8" cy="3" r="1" fill="#3c3c3c" />
          </svg>
        </button>
        <button type="button" aria-label="Favorites" className={btn}>
          <svg width="12" height="12" viewBox="0 0 12 12" className="fill-[#8a8a8a]" aria-hidden="true">
            <path d="M6 0l1.800 4H12L8.700 6.900 9.900 11.500 6 9l-3.900 2.500 1.200-4.600L0 4h4.200z" />
          </svg>
        </button>
        <button type="button" aria-label="Hidden packages" className="flex h-full w-10 items-center justify-center border-l border-[#232323] bg-[#3c3c3c] pr-[2px]">
          <EyeOff /><span>16</span>
        </button>
      </div>
      <div className="flex min-h-0 flex-1">
        <ul className="w-[276px] shrink-0 overflow-hidden">
          <li className="flex h-[14px] items-center gap-1 pl-[31px]"><SearchLarge />All Models</li>
          <li className="flex h-4 items-center gap-1 pl-[31px]"><SearchLarge />All Prefabs</li>
          <li className="mt-[15px] flex h-4 items-center gap-1 pl-1 font-semibold"><Foldout open className="mr-[1px]" /><Folder open />Assets</li>
          <li className="flex h-4 items-center gap-1 pl-[31px]"><Folder />Resources</li>
          <li className="flex h-4 items-center gap-1 pl-[18px]"><Foldout open className="mr-[1px]" /><Folder open />u2Vis</li>
        </ul>
        <div className="flex w-3 shrink-0 flex-col items-center bg-[#353535] pt-[6px]">
          <Caret className="rotate-180" />
          <span className="mt-[14px] w-[10px] flex-1 rounded-t-full bg-[#5f5f5f]" />
        </div>
        <div className="min-w-0 flex-1 overflow-hidden border-l border-[#232323] bg-[#333]">
          <nav aria-label="Breadcrumb" className="flex h-[21px] items-center gap-[6px] border-b border-[#272727] bg-[#3f3f3f] pl-1 text-[#b4b4b4]">
            {crumbs.map((c) => (
              <span key={c} className="flex items-center gap-[6px]"><a href="#project">{c}</a><Chevron /></span>
            ))}
            <span className="font-semibold text-[#c8c8c8]">Editor</span>
          </nav>
          <div className="flex gap-7 pt-[14px] pl-[23px]">
            <CsIcon size="lg" />
            <CsIcon size="lg" />
          </div>
        </div>
      </div>
    </section>
  );
}

export default function App() {
  return (
    <div className="grid h-screen grid-cols-[1299fr_618fr] gap-x-[2px] overflow-hidden bg-[#191919] pt-[2px] font-['Inter',sans-serif] text-xs leading-4 text-[#c4c4c4]">
      <div className="grid min-h-0 min-w-0 grid-rows-[648fr_125fr] gap-y-[2px]">
        <div className="grid min-h-0 min-w-0 grid-cols-[303fr_994fr] gap-x-[2px]">
          <Hierarchy />
          <SceneView />
        </div>
        <Project />
      </div>
      <Inspector />
    </div>
  );
}
